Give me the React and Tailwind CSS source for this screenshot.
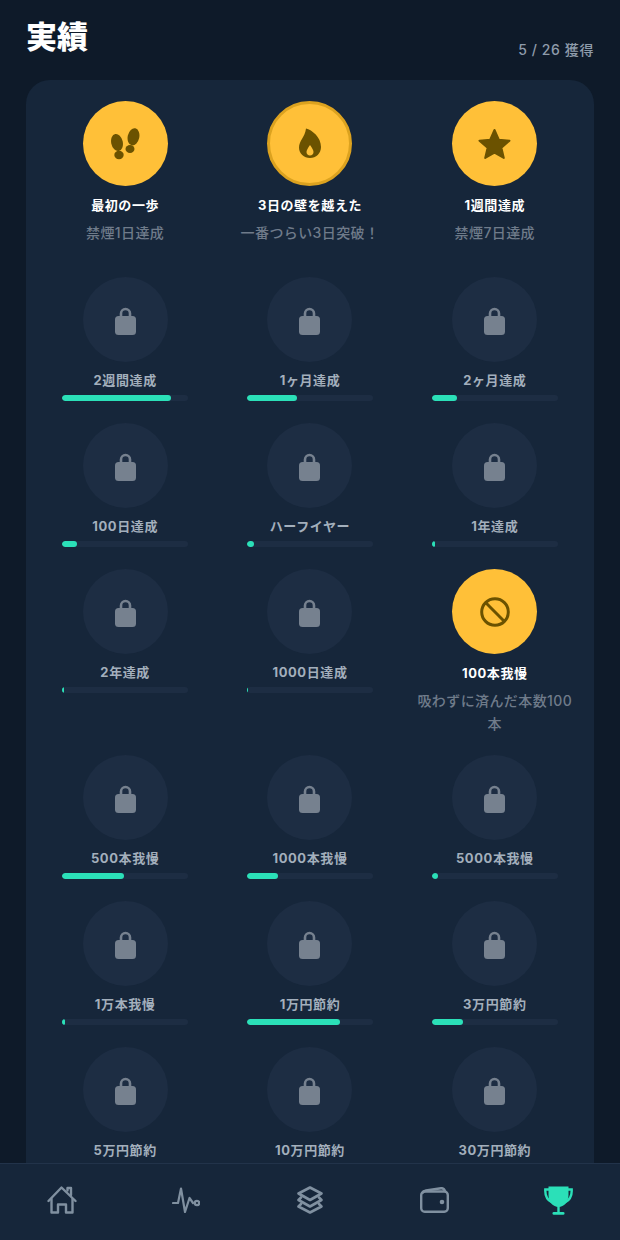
import React from "react";

const FONT = "font-['Inter','Noto_Sans_CJK_JP',sans-serif]";

// earned / locked achievements, in the order of the grid
const achievements = [
  { title: "最初の一歩", desc: "禁煙1日達成", icon: "steps" },
  { title: "3日の壁を越えた", desc: "一番つらい3日突破！", icon: "flame", ring: true },
  { title: "1週間達成", desc: "禁煙7日達成", icon: "star" },
  { title: "2週間達成", pct: 86 },
  { title: "1ヶ月達成", pct: 40 },
  { title: "2ヶ月達成", pct: 20 },
  { title: "100日達成", pct: 12 },
  { title: "ハーフイヤー", pct: 6 },
  { title: "1年達成", pct: 3 },
  { title: "2年達成", pct: 1.5 },
  { title: "1000日達成", pct: 1 },
  { title: "100本我慢", desc: "吸わずに済んだ本数100本", icon: "ban" },
  { title: "500本我慢", pct: 49 },
  { title: "1000本我慢", pct: 25 },
  { title: "5000本我慢", pct: 5 },
  { title: "1万本我慢", pct: 2.5 },
  { title: "1万円節約", pct: 74 },
  { title: "3万円節約", pct: 25 },
  { title: "5万円節約", pct: 15 },
  { title: "10万円節約", pct: 7 },
  { title: "30万円節約", pct: 2 },
];

function BadgeIcon({ name }) {
  if (name === "steps") {
    return (
      <svg width="29" height="32" viewBox="0 0 29 32" fill="#6b5200">
        <ellipse cx="6" cy="14.5" rx="5.8" ry="8.7" transform="rotate(-12 6 14.5)" />
        <ellipse cx="8" cy="27" rx="4.7" ry="4.2" />
        <ellipse cx="22.5" cy="8.8" rx="5.8" ry="8.7" transform="rotate(12 22.5 8.8)" />
        <ellipse cx="19" cy="21" rx="4.5" ry="4" />
      </svg>
    );
  }
  if (name === "flame") {
    return (
      <svg width="22" height="31" viewBox="0 0 22 31">
        <path
          fill="#6b5200"
          fillRule="evenodd"
          d="M7 .5C13 2 22 9 22 19c0 6.500-5 11-11 11S0 25.500 0 19.500C0 13 6 9 7 .5zM11 17c-2 3-3.500 5-3.500 7s1.500 3.500 3.500 3.500 3.500-1.500 3.500-3.500-1.500-4-3.500-7z"
        />
      </svg>
    );
  }
  if (name === "star") {
    return (
      <svg width="33" height="31" viewBox="0 0 33 31" fill="#6b5200" stroke="#6b5200" strokeWidth="2" strokeLinejoin="round">
        <path d="M16.500 2l4.300 9.700 10.700 1-8.100 7 2.400 10.300-9.300-5.400-9.300 5.400 2.400-10.300-8.100-7 10.700-1z" />
      </svg>
    );
  }
  return (
    <svg width="30" height="30" viewBox="0 0 30 30" fill="none" stroke="#6b5200" strokeWidth="3">
      <circle cx="15" cy="15" r="13.300" />
      <path d="M5.800 5.800l18.400 18.400" />
    </svg>
  );
}

function LockIcon() {
  return (
    <svg width="21" height="28" viewBox="0 0 21 28" className="mt-[3px]">
      <path d="M6 11V6.500a4.500 4.500 0 0 1 9 0V11" fill="none" stroke="#76818f" strokeWidth="2.600" />
      <rect x="0" y="9" width="21" height="19" rx="3.500" fill="#76818f" />
    </svg>
  );
}

function Achievement({ item }) {
  if (item.pct === undefined) {
    return (
      <div className="min-h-[156px] flex flex-col items-center text-center">
        <div className={`w-[85px] h-[85px] rounded-full bg-[#ffc038] flex items-center justify-center ${item.ring ? "border-[3px] border-[#dca21f]" : ""}`}>
          <BadgeIcon name={item.icon} />
        </div>
        <div className="mt-[9px] text-[13px] leading-[20px] font-bold tracking-[0.6px] text-white">{item.title}</div>
        <div className="mt-[6px] text-[14px] leading-[23px] font-medium text-[#6f7b8a] tracking-[0.4px] px-[6px]">{item.desc}</div>
      </div>
    );
  }
  return (
    <div className="pb-[2px] flex flex-col items-center text-center">
      <div className="w-[85px] h-[85px] rounded-full bg-[#1d2d43] flex items-center justify-center">
        <LockIcon />
      </div>
      <div className="mt-[8px] text-[13px] leading-[20px] font-bold tracking-[0.6px] text-[#a3afbc]">{item.title}</div>
      <div className="mt-[5px] w-3/4 h-[6px] rounded-full bg-[#1d2d43] overflow-hidden">
        <div className="h-full rounded-full bg-[#2be0b8]" style={{ width: `${item.pct}%` }} />
      </div>
    </div>
  );
}

function NavHome() {
  return (
    <svg width="30" height="28" viewBox="0 0 30 28" fill="none" stroke="#8090a0" strokeWidth="2.400" strokeLinejoin="round" strokeLinecap="round">
      <path d="M1.500 15L14.500 1.500 28.500 15" />
      <path d="M4.500 13v13.500H11V18.500h8v8h6.500V13" />
      <path d="M20.500 4.500V2H24v7" />
    </svg>
  );
}

function NavPulse() {
  return (
    <svg width="28" height="26" viewBox="0 0 28 26" fill="none" stroke="#8090a0" strokeWidth="2.200" strokeLinejoin="round" strokeLinecap="round">
      <path d="M1 16h5L9 1.500l4 23.500 4.500-14 3.500 5" />
      <circle cx="25" cy="16" r="2.200" />
    </svg>
  );
}

function NavLayers() {
  return (
    <svg width="26" height="28" viewBox="0 0 26 28" fill="none" stroke="#8090a0" strokeWidth="2.600" strokeLinejoin="round" strokeLinecap="round">
      <path d="M13 1.500l11.500 6L13 14 1.500 7.500z" />
      <path d="M4 11.500L1.500 14 13 20.500 24.500 14 22 11.500" />
      <path d="M4 18l-2.500 2.500L13 26.500l11.500-6L22 18" />
    </svg>
  );
}

function NavWallet() {
  return (
    <svg width="29" height="26" viewBox="0 0 29 26" fill="none" stroke="#8090a0" strokeWidth="2.400" strokeLinejoin="round">
      <rect x="1.200" y="4.500" width="26.600" height="20.300" rx="3.500" />
      <path d="M2 6.500C3 4.500 4 4 6 3.500L21 1.200c2-.200 3.500.800 4 3.300" />
      <circle cx="22" cy="15" r="2.300" fill="#8090a0" stroke="none" />
    </svg>
  );
}

function NavTrophy() {
  return (
    <svg width="29" height="29" viewBox="0 0 29 29" fill="#2be0b8">
      <path d="M4.500.5h20V9c0 7-4.500 12-10 12s-10-5-10-12z" />
      <path d="M5 3.500H1.300C1 9 3 14 8 16.500M24 3.500h3.700C28 9 26 14 21 16.500" fill="none" stroke="#2be0b8" strokeWidth="2.400" />
      <rect x="13.300" y="20" width="2.400" height="7" />
      <rect x="8.500" y="26" width="12" height="2.700" rx="1.300" />
    </svg>
  );
}

export default function App() {
  return (
    <div className={`${FONT} w-[620px] h-[1240px] overflow-hidden flex flex-col bg-[#0e1a29]`}>
      <div className="flex-1 min-h-0 overflow-hidden px-[26px]">
        {/* header */}
        <div className="h-[80px] flex justify-between items-start">
          <h1 className="mt-[15px] text-[31px] leading-[44px] font-black text-white">実績</h1>
          <span className="mt-[39px] text-[14px] leading-[22px] font-medium tracking-[0.6px] text-[#8e9cab]">5 / 26 獲得</span>
        </div>

        {/* achievement grid, runs on under the tab bar */}
        <div className="rounded-[24px] bg-[#16263a] px-[15px] pt-[21px] pb-[40px] grid grid-cols-3 gap-x-[16.5px] gap-y-[20px]">
          {achievements.map((a) => (
            <Achievement key={a.title} item={a} />
          ))}
        </div>
      </div>

      {/* tab bar */}
      <nav className="h-[77px] shrink-0 bg-[#16263a] border-t border-[#22334a] pt-[17px]">
        <div className="h-[38px] grid grid-cols-5 items-center justify-items-center">
          <NavHome />
          <NavPulse />
          <NavLayers />
          <NavWallet />
          <NavTrophy />
        </div>
      </nav>
    </div>
  );
}
